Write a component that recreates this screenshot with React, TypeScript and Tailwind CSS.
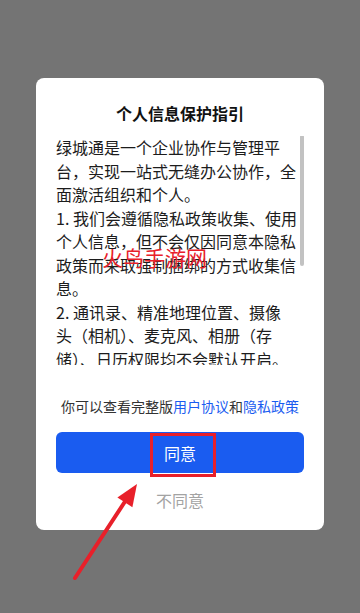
const FONT = { fontFamily: '"Noto Sans CJK SC", "Noto Sans", sans-serif' };

const LINES = [
  "绿城通是一个企业协作与管理平",
  "台，实现一站式无缝办公协作，全",
  "面激活组织和个人。",
  "1. 我们会遵循隐私政策收集、使用",
  "个人信息，但不会仅因同意本隐私",
  "政策而采取强制捆绑的方式收集信",
  "息。",
  "2. 通讯录、精准地理位置、摄像",
  "头（相机）、麦克风、相册（存",
  "储）、日历权限均不会默认开启。",
  "只有经过明示授权才会为实现功能",
  "或服务时使用，不会在功能或服务",
  "不需要时而通过你的授权来收集信",
  "息。",
];

function Arrow() {
  return (
    <svg
      className="pointer-events-none absolute left-0 top-0"
      width="360"
      height="613"
      viewBox="0 0 360 613"
    >
      <line x1="75" y1="578" x2="126" y2="500" stroke="#e8202a" strokeWidth="4" strokeLinecap="round" />
      <polygon points="137,484 132.4,507.3 117.4,497.4" fill="#e8202a" />
    </svg>
  );
}

export default function App() {
  return (
    <div className="relative min-h-[613px] w-[360px] bg-[#747474] pt-[78px]" style={FONT}>
      <div className="relative mx-auto w-[288px] rounded-[8px] bg-white px-5 pb-[18px] pt-[23px]">
        <h1 className="text-center text-[16px] font-bold leading-[24px] text-[#111]">个人信息保护指引</h1>

        <div className="relative mt-[11px] h-[229px] overflow-hidden">
          <div className="w-[240px] text-[16px] leading-[23.5px] text-[#1c1c1c]">
            {LINES.map((l, i) => (
              <div key={i} className="whitespace-nowrap">
                {l}
              </div>
            ))}
          </div>
          {/* scroll thumb */}
          <div className="absolute right-0 top-[-1px] h-[131px] w-[4px] rounded-full bg-[#c2c2c2]" />
          {/* watermark */}
          <div className="absolute left-[46px] top-[109px] whitespace-nowrap text-[21px] leading-[24px] text-[#e8202a]">
            火鸟手游网
          </div>
        </div>

        <p className="mt-[31px] whitespace-nowrap text-center text-[14px] leading-[20px] text-[#333]">
          你可以查看完整版<span className="text-[#1a5cf0]">用户协议</span>和
          <span className="text-[#1a5cf0]">隐私政策</span>
        </p>

        <button className="mt-4 block h-[41px] w-full rounded-[6px] bg-[#1a5cf0] text-[16px] text-white">
          同意
        </button>

        <p className="mt-[15px] text-center text-[16px] leading-[24px] text-[#a3a3a3]">不同意</p>

        {/* annotation box */}
        <div className="pointer-events-none absolute left-[114px] top-[355px] h-[44px] w-[66px] border-[3px] border-[#e8202a]" />
      </div>
      <Arrow />
    </div>
  );
}
